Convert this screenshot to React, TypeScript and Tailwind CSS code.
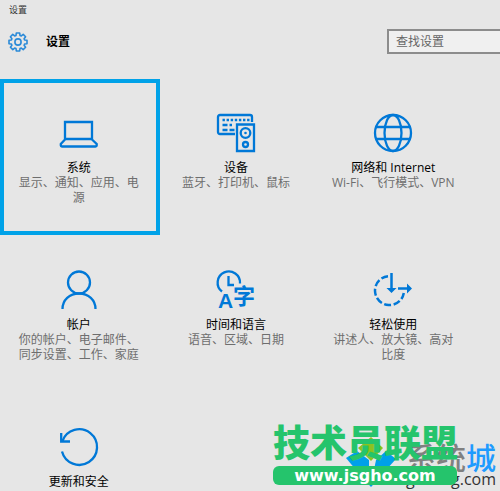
import type { ReactNode } from 'react';

type Category = {
  title: string;
  description?: string;
  icon: ReactNode;
  selected?: boolean;
};

const iconProps = {
  className: 'h-[38px] w-[38px] shrink-0 overflow-visible text-[#0078d7]',
  viewBox: '0 0 38 38',
  fill: 'none',
  stroke: 'currentColor',
  strokeWidth: 2.3,
  'aria-hidden': true,
};

function GearIcon() {
  return (
    <svg className="h-5 w-5 text-[#2a8ad8]" viewBox="0 0 20 20" fill="none" stroke="currentColor" strokeWidth="1.6" strokeLinejoin="round" aria-hidden="true">
      <path d="M8 3.400 8.300 1h3.400l.3 2.400 1.300.5 1.900-1.500 2.400 2.400-1.500 1.900.5 1.300 2.400.3v3.400l-2.400.3-.5 1.300 1.500 1.900-2.400 2.400-1.900-1.500-1.300.5-.3 2.400H8.300L8 16.600l-1.300-.5-1.900 1.500-2.400-2.400 1.500-1.900-.5-1.300L1 11.700V8.300L3.400 8l.5-1.300-1.500-1.900 2.400-2.400 1.900 1.500z" />
      <circle cx="10" cy="10" r="3.1" />
    </svg>
  );
}

function LaptopIcon() {
  return (
    <svg {...iconProps}>
      <path d="M5 8h27v17H5zM5 25.500.8 30v1.500c0 .8.600 1 1.200 1h33.500c.6 0 1.200-.2 1.200-1V30L32 25.500" />
    </svg>
  );
}

function DevicesIcon() {
  return (
    <svg {...iconProps}>
      <path d="M18 20H3c-1.200 0-2-.8-2-2V3c0-1.200.8-2 2-2h30c1.200 0 2 .8 2 2v5" />
      <path d="M5.500 6h27" strokeDasharray="2.4 1.700" />
      <path d="M5.500 11h5M12.500 11h2.500M5.500 16h5M12.500 16h5" />
      <path d="M20 10.500h17V37H20z" />
      <circle cx="28.500" cy="19" r="4.800" />
      <circle cx="28.500" cy="30.500" r="2.500" />
      <circle cx="28.500" cy="19" r="1.300" fill="currentColor" stroke="none" />
    </svg>
  );
}

function GlobeIcon() {
  return (
    <svg {...iconProps}>
      <circle cx="19" cy="19" r="18" />
      <ellipse cx="19" cy="19" rx="8.500" ry="18" />
      <path d="M2 13h34M2 25h34" />
    </svg>
  );
}

function PersonIcon() {
  return (
    <svg {...iconProps}>
      <circle cx="19" cy="11.500" r="11" />
      <path d="M2.500 38c0-9 7-15.500 16.500-15.500S35.500 29 35.500 38" />
    </svg>
  );
}

function LanguageIcon() {
  return (
    <svg {...iconProps}>
      <path d="M5 20.500A11.200 11.200 0 1 1 23 12.500" />
      <path d="M11.500 5v9H17" />
      <text x="1" y="37" fontSize="21" fontWeight="bold" fontFamily="Liberation Sans, sans-serif" fill="currentColor" stroke="none">
        A
      </text>
      <text x="16" y="33" fontSize="22" fontWeight="bold" fontFamily="Noto Sans CJK SC, sans-serif" fill="currentColor" stroke="none">
        字
      </text>
    </svg>
  );
}

function EaseIcon() {
  return (
    <svg {...iconProps}>
      <path d="M14 5.200A14.500 14.500 0 1 0 29.800 22" strokeWidth="2.500" strokeDasharray="7 2.600" />
      <path d="M17.500 2v17M24 17.500h11" strokeWidth="2.500" />
      <path d="M12.500 17h10l-5 5zM33 12.500v10l5-5z" fill="currentColor" stroke="none" />
    </svg>
  );
}

function UpdateIcon() {
  return (
    <svg {...iconProps}>
      <path d="M2 23.500A17.800 17.800 0 1 0 2.500 13" />
      <path d="M1.200 5v8.500H10" />
    </svg>
  );
}

const categories: Category[] = [
  { title: '系统', description: '显示、通知、应用、电源', icon: <LaptopIcon />, selected: true },
  { title: '设备', description: '蓝牙、打印机、鼠标', icon: <DevicesIcon /> },
  { title: '网络和 Internet', description: 'Wi-Fi、飞行模式、VPN', icon: <GlobeIcon /> },
  { title: '帐户', description: '你的帐户、电子邮件、同步设置、工作、家庭', icon: <PersonIcon /> },
  { title: '时间和语言', description: '语音、区域、日期', icon: <LanguageIcon /> },
  { title: '轻松使用', description: '讲述人、放大镜、高对比度', icon: <EaseIcon /> },
  { title: '更新和安全', icon: <UpdateIcon /> },
];

function CategoryTile({ title, description, icon, selected }: Category) {
  return (
    <a href="#" className="relative flex h-[156px] flex-col items-center pt-[35px] text-center text-[12px] leading-[15px]">
      {selected && <span className="absolute inset-y-0 left-0 -right-[3px] border-4 border-[#00a2e8]" />}
      {icon}
      <span className="mt-2 text-black">{title}</span>
      <span className="w-32 text-[#6e6e6e]">{description}</span>
    </a>
  );
}

function Watermark() {
  return (
    <div className="absolute right-0 bottom-0 h-[70px] w-[230px]">
      {/* Site logo behind the green banner */}
      <svg className="absolute top-[16px] left-[76px] h-[50px] w-[50px]" viewBox="0 0 50 50" aria-hidden="true">
        <path d="M12 11 25 0l12 11-12 13z" fill="#8cc220" />
        <path d="M0 21 11 14l12 9v10H10z" fill="#00a0e9" />
        <path d="M30 23 40 14l10 8-10 11H28z" fill="#00a0e9" />
        <path d="M12 36h26L25 50z" fill="#00a0e9" />
      </svg>
      <div className="absolute top-[22px] right-[4px] text-[30px] leading-[30px] font-medium text-[#808080]">
        系统<span className="text-[#1e9bff]">城</span>
      </div>
      <div className="absolute right-[4px] bottom-[2px] font-['Open_Sans',sans-serif] text-[16px] leading-5 text-[#333]">xitongcheng.com</div>
      <div className="absolute top-[2px] left-[3px] text-[37px] leading-10 font-black whitespace-nowrap text-[#25c46c]">技术员联盟</div>
      <div className="absolute top-[45px] left-[3px] w-[184px] rounded-md bg-[#25c46c] text-center font-['DejaVu_Sans',sans-serif] text-[16px] leading-[19px] font-bold text-white">
        www.jsgho.com
      </div>
    </div>
  );
}

export default function App() {
  return (
    <div className="relative h-screen overflow-hidden bg-[#e6e6e6] font-['Open_Sans','Noto_Sans_CJK_SC',sans-serif]">
      <div className="px-[9px] pt-[3px] text-[9px] leading-[14px] text-[#333]">设置</div>
      <header className="flex items-center pt-3 pl-2">
        <GearIcon />
        <h1 className="ml-[18px] text-[12px] leading-4 font-bold text-black">设置</h1>
        <input
          type="text"
          aria-label="查找设置"
          placeholder="查找设置"
          className="ml-auto h-[25px] w-[113px] border-2 border-r-0 border-[#8c8c8c] bg-[#f0f0f0] px-[7px] text-[12px] placeholder:text-[#666]"
        />
      </header>
      <main className="mt-[25px] grid grid-cols-3 gap-y-px pr-7">
        {categories.map((category) => (
          <CategoryTile key={category.title} {...category} />
        ))}
      </main>
      <Watermark />
    </div>
  );
}
